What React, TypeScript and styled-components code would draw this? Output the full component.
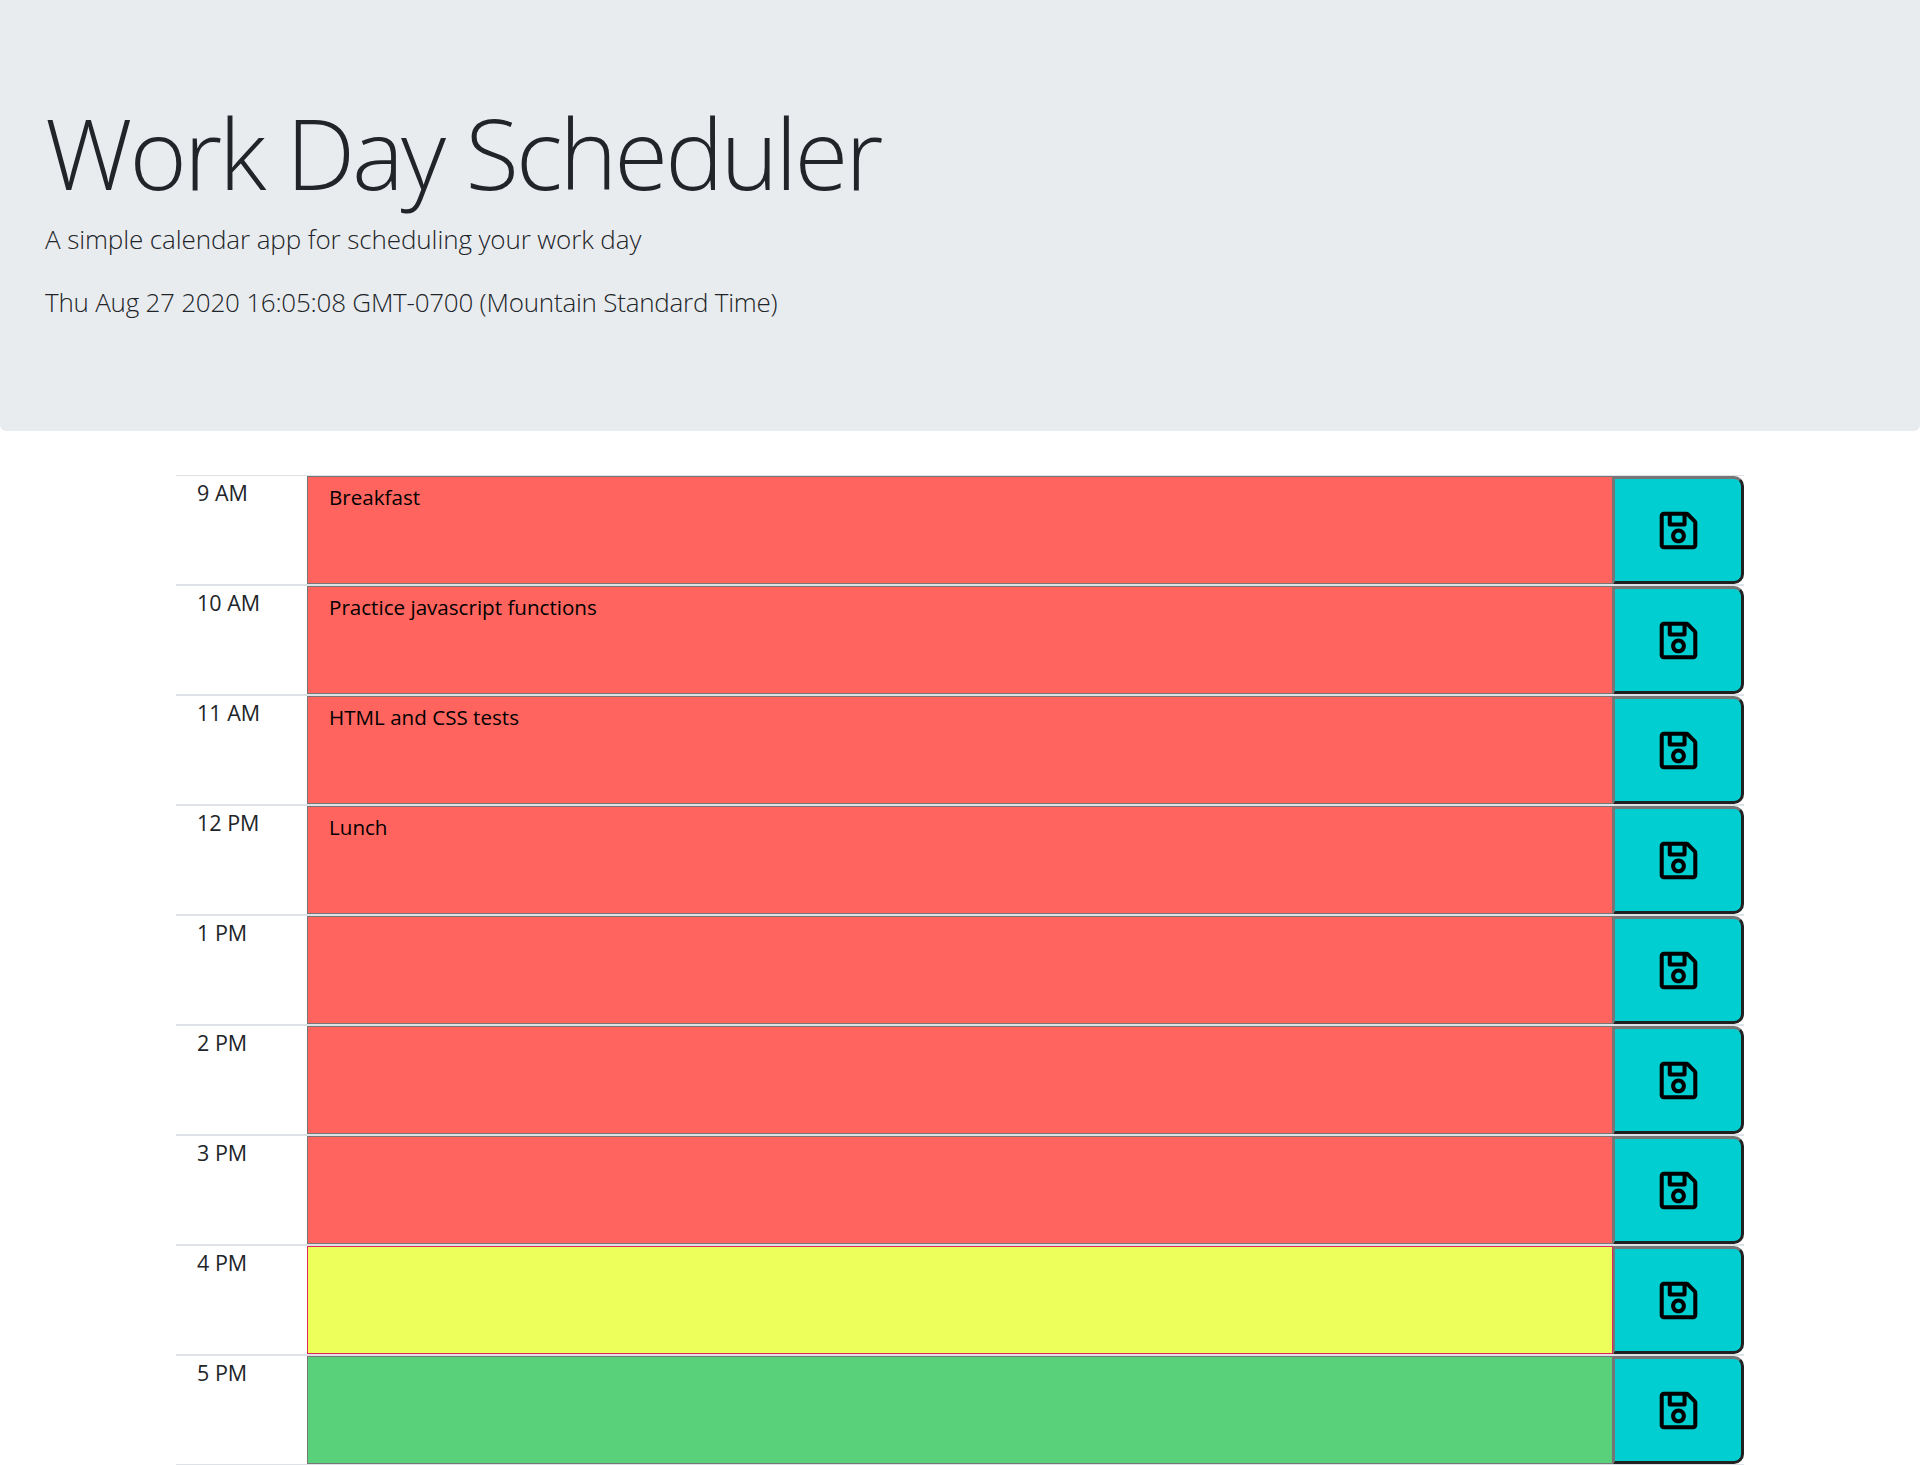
import styled, { createGlobalStyle } from 'styled-components';
import { FaRegSave } from 'react-icons/fa';

const GlobalStyle = createGlobalStyle`
    html, body {
        margin: 0;
        padding: 0;
        background: #fff;
    }
    body {
        font-family: 'Open Sans', 'Noto Sans', sans-serif;
        color: #212529;
    }
`;

type Status = 'past' | 'present' | 'future';

const hours: { label: string; task: string; status: Status }[] = [
    { label: '9 AM', task: 'Breakfast', status: 'past' },
    { label: '10 AM', task: 'Practice javascript functions', status: 'past' },
    { label: '11 AM', task: 'HTML and CSS tests', status: 'past' },
    { label: '12 PM', task: 'Lunch', status: 'past' },
    { label: '1 PM', task: '', status: 'past' },
    { label: '2 PM', task: '', status: 'past' },
    { label: '3 PM', task: '', status: 'past' },
    { label: '4 PM', task: '', status: 'present' },
    { label: '5 PM', task: '', status: 'future' },
];

const statusColors: Record<Status, string> = {
    past: '#ff655e',
    present: '#edff5a',
    future: '#59d07a',
};

export default function App() {
    return (
        <>
            <GlobalStyle />
            <Header>
                <Title>Work Day Scheduler</Title>
                <Lead>A simple calendar app for scheduling your work day</Lead>
                <CurrentDay>Thu Aug 27 2020 16:05:08 GMT-0700 (Mountain Standard Time)</CurrentDay>
            </Header>
            <Schedule>
                {hours.map((hour) => (
                    <Row key={hour.label}>
                        <Hour>{hour.label}</Hour>
                        <Task $status={hour.status} defaultValue={hour.task} />
                        <SaveButton aria-label={`Save ${hour.label}`}>
                            <FaRegSave size={43} />
                        </SaveButton>
                    </Row>
                ))}
            </Schedule>
        </>
    );
}

const Header = styled.header`
    box-sizing: border-box;
    height: 431px;
    padding: 98px 45px 0;
    margin-bottom: 44px;
    background: #e9ecef;
    border-radius: 0 0 6px 6px;
`;

const Title = styled.h1`
    margin: 0 0 14px;
    font-size: 98px;
    line-height: 108px;
    font-weight: 300;
    letter-spacing: -3px;
`;

const Lead = styled.p`
    margin: 0 0 25px;
    font-size: 26px;
    line-height: 38px;
    font-weight: 300;
    letter-spacing: -0.1px;
`;

const CurrentDay = styled(Lead)`
    margin: 0;
    letter-spacing: -0.23px;
`;

const Schedule = styled.main`
    width: 1568px;
    margin-left: 176px;
    border-bottom: 1px solid #dee2e6;
`;

const Row = styled.div`
    box-sizing: border-box;
    display: grid;
    grid-template-columns: 131px 1306px 131px;
    height: 110px;
    border-top: 2px solid #dee2e6;

    &:first-child {
        height: 109px;
        border-top-width: 1px;
    }
`;

const Hour = styled.div`
    padding: 2px 0 0 21px;
    font-size: 21.5px;
    line-height: 30px;
`;

const Task = styled.textarea<{ $status: Status }>`
    box-sizing: border-box;
    display: block;
    width: 100%;
    height: 108px;
    margin: 0;
    padding: 5px 21px;
    resize: none;
    outline: none;
    border: 1px solid ${(props) => (props.$status === 'present' ? '#e0245e' : '#767676')};
    background: ${(props) => statusColors[props.$status]};
    color: #000;
    font-family: 'Open Sans', 'Noto Sans', sans-serif;
    font-size: 20.6px;
    line-height: 30px;
`;

const SaveButton = styled.button`
    box-sizing: border-box;
    display: flex;
    align-items: center;
    justify-content: center;
    height: 108px;
    padding: 0;
    color: #000;
    background: #00ced1;
    border-style: solid;
    border-width: 3px 3px 3px 2px;
    border-color: #767676 #212121 #212121 #767676;
    border-radius: 0 10px 10px 0;
`;
